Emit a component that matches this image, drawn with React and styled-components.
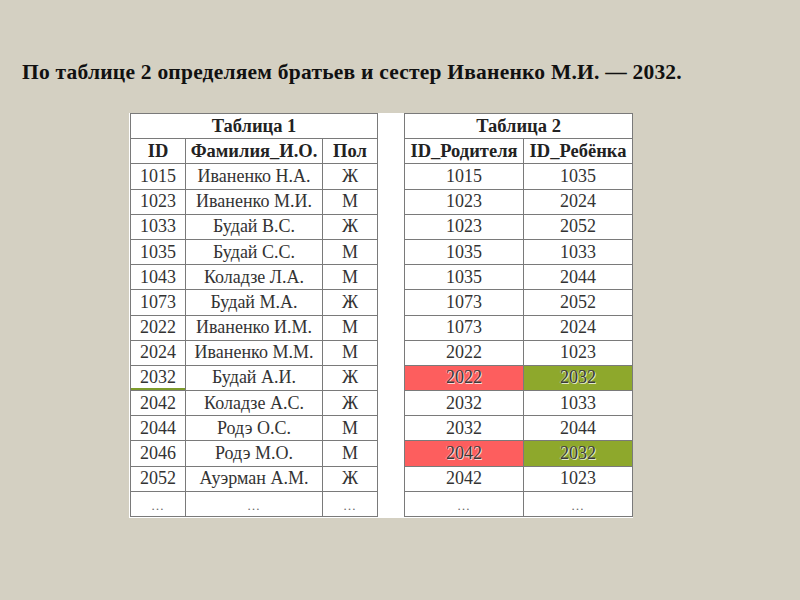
import React from "react";
import styled, { createGlobalStyle } from "styled-components";

const Global = createGlobalStyle`
  html, body { margin: 0; padding: 0; }
  body {
    background: #d4d0c2;
    width: 800px;
    height: 600px;
    overflow: hidden;
    font-family: "Liberation Serif", "Times New Roman", serif;
  }
`;

const Page = styled.div`
  width: 800px;
  height: 600px;
  background: #d4d0c2;
  padding-top: 57px;
  box-sizing: border-box;
`;

const Title = styled.h1`
  margin: 0 0 0 22px;
  font-family: "Liberation Serif", "Times New Roman", serif;
  font-weight: bold;
  font-size: 21.5px;
  line-height: 30px;
  color: #111;
  letter-spacing: 0.22px;
`;

const Sheet = styled.div`
  margin: 26px 0 0 129px;
  width: 504px;
  height: 405px;
  background: #fff;
  display: flex;
  align-items: flex-start;
  padding-left: 1px;
  box-sizing: border-box;
`;

const Table = styled.table`
  border-collapse: collapse;
  table-layout: fixed;
  width: ${(p) => p.$width}px;
  margin-left: ${(p) => p.$offset || 0}px;
  color: #333;
  font-family: "Liberation Serif", "Times New Roman", serif;
  font-size: 18px;
`;

const Row = styled.tr`
  height: 25.2px;
`;

const Cell = styled.td`
  border: 1px solid #7a7a7a;
  padding: 0;
  height: 24px;
  box-sizing: border-box;
  text-align: center;
  vertical-align: middle;
  line-height: 19px;
  white-space: nowrap;
  overflow: hidden;
  background: ${(p) => (p.$fill === "red" ? "#fd5e5e" : p.$fill === "green" ? "#8ea82c" : "#fff")};
  box-shadow: ${(p) => (p.$underline ? "inset 0 -2px 0 #7d9b2c" : "none")};
  text-shadow: ${(p) =>
    p.$fill ? "1px 1px 0 rgba(255,255,255,0.75), -1px 0 0 rgba(255,255,255,0.35)" : "none"};
  color: ${(p) => (p.$fill ? "#3a3a3a" : "#333")};
`;

const HeadCell = styled(Cell).attrs({ as: "th" })`
  font-weight: bold;
  font-size: 18.5px;
  color: #222;
`;

const Dots = styled.span`
  display: inline-block;
  padding-top: 5px;
  font-size: 13px;
  line-height: 13px;
  letter-spacing: 1px;
  color: #666;
`;

const people = [
  ["1015", "Иваненко Н.А.", "Ж"],
  ["1023", "Иваненко М.И.", "М"],
  ["1033", "Будай В.С.", "Ж"],
  ["1035", "Будай С.С.", "М"],
  ["1043", "Коладзе Л.А.", "М"],
  ["1073", "Будай М.А.", "Ж"],
  ["2022", "Иваненко И.М.", "М"],
  ["2024", "Иваненко М.М.", "М"],
  ["2032", "Будай А.И.", "Ж"],
  ["2042", "Коладзе А.С.", "Ж"],
  ["2044", "Родэ О.С.", "М"],
  ["2046", "Родэ М.О.", "М"],
  ["2052", "Ауэрман А.М.", "Ж"],
];

const links = [
  ["1015", "1035"],
  ["1023", "2024"],
  ["1023", "2052"],
  ["1035", "1033"],
  ["1035", "2044"],
  ["1073", "2052"],
  ["1073", "2024"],
  ["2022", "1023"],
  ["2022", "2032", true],
  ["2032", "1033"],
  ["2032", "2044"],
  ["2042", "2032", true],
  ["2042", "1023"],
];

export default function App() {
  return (
    <Page>
      <Global />
      <Title>По таблице 2 определяем братьев и сестер Иваненко М.И. — 2032.</Title>
      <Sheet>
        <Table $width={247}>
          <colgroup>
            <col style={{ width: 55 }} />
            <col style={{ width: 137 }} />
            <col style={{ width: 55 }} />
          </colgroup>
          <tbody>
            <Row>
              <HeadCell colSpan={3}>Таблица 1</HeadCell>
            </Row>
            <Row>
              <HeadCell>ID</HeadCell>
              <HeadCell>Фамилия_И.О.</HeadCell>
              <HeadCell>Пол</HeadCell>
            </Row>
            {people.map(([id, name, sex]) => (
              <Row key={id}>
                <Cell $underline={id === "2032"}>{id}</Cell>
                <Cell>{name}</Cell>
                <Cell>{sex}</Cell>
              </Row>
            ))}
            <Row>
              <Cell><Dots>…</Dots></Cell>
              <Cell><Dots>…</Dots></Cell>
              <Cell><Dots>…</Dots></Cell>
            </Row>
          </tbody>
        </Table>
        <Table $width={228} $offset={26}>
          <colgroup>
            <col style={{ width: 119 }} />
            <col style={{ width: 109 }} />
          </colgroup>
          <tbody>
            <Row>
              <HeadCell colSpan={2}>Таблица 2</HeadCell>
            </Row>
            <Row>
              <HeadCell>ID_Родителя</HeadCell>
              <HeadCell>ID_Ребёнка</HeadCell>
            </Row>
            {links.map(([p, c, hi], i) => (
              <Row key={i}>
                <Cell $fill={hi ? "red" : undefined}>{p}</Cell>
                <Cell $fill={hi ? "green" : undefined}>{c}</Cell>
              </Row>
            ))}
            <Row>
              <Cell><Dots>…</Dots></Cell>
              <Cell><Dots>…</Dots></Cell>
            </Row>
          </tbody>
        </Table>
      </Sheet>
    </Page>
  );
}
